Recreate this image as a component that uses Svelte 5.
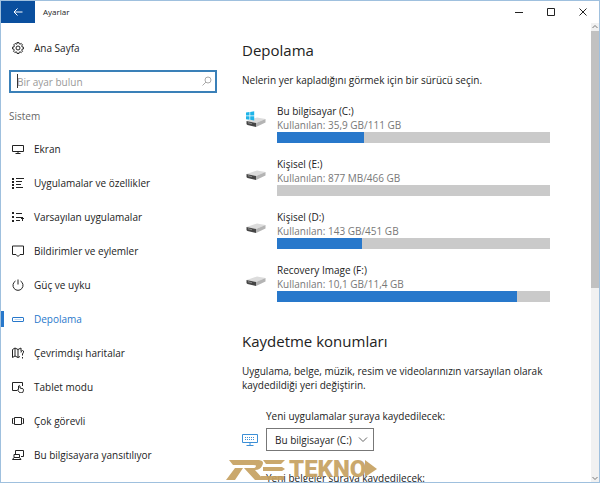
<!--
  Storage page of the settings window: title bar, section navigation,
  drive usage list and default save locations.
-->
<script lang="ts">
  type Drive = { name: string; used: string; percent: number; system?: boolean };

  const sections = [
    { id: 'display', label: 'Ekran' },
    { id: 'apps', label: 'Uygulamalar ve özellikler' },
    { id: 'defaults', label: 'Varsayılan uygulamalar' },
    { id: 'notifications', label: 'Bildirimler ve eylemler' },
    { id: 'power', label: 'Güç ve uyku' },
    { id: 'storage', label: 'Depolama' },
    { id: 'maps', label: 'Çevrimdışı haritalar' },
    { id: 'tablet', label: 'Tablet modu' },
    { id: 'multitasking', label: 'Çok görevli' },
    { id: 'projecting', label: 'Bu bilgisayara yansıtılıyor' },
  ];

  const drives: Drive[] = [
    { name: 'Bu bilgisayar (C:)', used: '35,9 GB/111 GB', percent: 32, system: true },
    { name: 'Kişisel (E:)', used: '877 MB/466 GB', percent: 0 },
    { name: 'Kişisel (D:)', used: '143 GB/451 GB', percent: 31 },
    { name: 'Recovery Image (F:)', used: '10,1 GB/11,4 GB', percent: 88 },
  ];

  let active = $state('storage');
  let query = $state('');
  let appTarget = $state('Bu bilgisayar (C:)');
</script>

{#snippet sectionIcon(id: string)}
  <svg class="icon" viewBox="0 0 12 12" aria-hidden="true">
    {#if id === 'display'}
      <path d="M.5 2.5h11v6H.5zM3.5 10.5h5M6 8.5v2" />
    {:else if id === 'apps'}
      <path d="M4 1.5h8M4 4.5h6M4 7.5h5M4 10.5h7" />
      <path class="dots" d="M0 1h2v2H0zM0 4h2v2H0zM0 7h2v2H0zM0 10h2v2H0z" />
    {:else if id === 'defaults'}
      <path d="M4 2.5h6M4 6.5h7M4 9.5h4M10.5 10V6.5M9 8l1.5-1.5L12 8" />
      <path class="dots" d="M0 1h2v2H0zM0 5h2v2H0zM0 9h2v2H0z" />
    {:else if id === 'notifications'}
      <path d="M.5 1h11v8.500H8L6 11.500l-2-2H.5z" />
    {:else if id === 'power'}
      <path d="M6 .5v5M3.500 2a5 5 0 1 0 5 0" />
    {:else if id === 'storage'}
      <rect x=".5" y="4.500" width="11" height="4" rx=".5" />
      <path class="faint" d="M2.500 6.500h7" />
    {:else if id === 'maps'}
      <path d="M.5 2.500 3 1l3 1.500L9 1v3M.5 2.500v8L3 9l3 1.500 2-1M3 1v8M6 2.500v8M9 5.500q0-2 1.500-2 1.500.2 1 1.700L10.500 7v1.500M10.500 10v1.500" />
    {:else if id === 'tablet'}
      <path d="M5 9.500H.5v-8h10V5M6.500 8.500V5q.7-1 1.500 0v2l3 .8q.8.5.4 2l-.9 2H7.800L5.500 9q0-.8 1-.5" />
    {:else if id === 'multitasking'}
      <path d="M2.500 2.500h7v7h-7zM1.500 3.500h-1v5h1M10.500 3.500h1v5h-1" />
    {:else}
      <path d="M3.500 5V1.500h8v6H9M2 5.500h5.500v3H2zM2 8.500l-1.500 2H9l-1.500-2" />
    {/if}
  </svg>
{/snippet}

<div class="window">
  <header class="titlebar">
    <button type="button" class="back" aria-label="Geri">
      <svg viewBox="0 0 10 10" aria-hidden="true"><path d="M9.500 5H1M4.500 1.500 1 5l3.500 3.500" /></svg>
    </button>
    <span class="title">Ayarlar</span>
    <div class="controls">
      <button type="button" aria-label="Simge durumuna küçült">
        <svg viewBox="0 0 8 8" aria-hidden="true"><path d="M0 4.500h8" /></svg>
      </button>
      <button type="button" aria-label="Ekranı kapla">
        <svg viewBox="0 0 8 8" aria-hidden="true"><path d="M.5.5h7v7h-7z" /></svg>
      </button>
      <button type="button" aria-label="Kapat">
        <svg viewBox="0 0 8 8" aria-hidden="true"><path d="m.5.5 7 7m0-7-7 7" /></svg>
      </button>
    </div>
  </header>

  <div class="body">
    <aside>
      <a class="home" href="#home">
        <svg viewBox="0 0 12 12" aria-hidden="true">
          <path d="m4.900.6.2 1.200-.9.400-1-.8L1.700 2.900l.7 1-.4 1L.6 5.100v1.900l1.300.2.4.9-.8 1.100 1.400 1.400 1.100-.8.9.4.2 1.300h1.900l.2-1.300.9-.4 1.100.8 1.300-1.400-.8-1.100.4-.9 1.300-.2V5.100l-1.300-.2-.4-1 .8-1-1.300-1.500-1.100.8-.9-.4L7 .6z" />
          <circle cx="6" cy="6" r="2" />
        </svg>
        Ana Sayfa
      </a>

      <div class="search">
        <input type="text" aria-label="Ayar bulun" placeholder="Bir ayar bulun" bind:value={query} />
        {#if !query}<span class="caret"></span>{/if}
        <svg viewBox="0 0 10 10" aria-hidden="true"><circle cx="6" cy="4" r="3" /><path d="M4 6 .5 9.500" /></svg>
      </div>

      <h2 class="group">Sistem</h2>
      <nav>
        {#each sections as section (section.id)}
          <a
            href="#{section.id}"
            class:active={active === section.id}
            aria-current={active === section.id ? 'page' : undefined}
            onclick={() => (active = section.id)}
          >
            {@render sectionIcon(section.id)}
            {section.label}
          </a>
        {/each}
      </nav>
    </aside>

    <main>
      <h1>Depolama</h1>
      <p class="hint">Nelerin yer kapladığını görmek için bir sürücü seçin.</p>

      <div class="drives">
        {#each drives as drive (drive.name)}
          <button type="button" class="drive">
            <svg class="disk" viewBox="0 0 22 24" aria-hidden="true">
              <path fill="#dcdcdc" d="M1.500 17 12 13.500l8.500 1.500L11 19z" />
              <path fill="#454545" d="m1.500 17 9.500 2v4l-8.500-2q-1-.5-1-1.500z" />
              <path fill="#b4b4b4" d="m11 19 9.500-4v3.500L11 23z" />
              <path fill="#8d8d8d" d="m3 18.300 4 .9v1l-4-.9z" />
              {#if drive.system}
                <path fill="#1fb4e8" d="m1 8.500 3.500-.5v3.500H1zM5.200 7.900 9.200 7.300v4.200h-4zM1 12.200h3.500v3.500L1 15.200zM5.200 12.200h4v4.200l-4-.6z" />
              {/if}
            </svg>
            <span class="info">
              <span class="name">{drive.name}</span>
              <span class="used">Kullanılan: {drive.used}</span>
              <progress max="100" value={drive.percent} aria-label={drive.name}></progress>
            </span>
          </button>
        {/each}
      </div>

      <h1>Kaydetme konumları</h1>
      <p class="hint">
        Uygulama, belge, müzik, resim ve videolarınızın varsayılan olarak kaydedildiği yeri değiştirin.
      </p>

      <div class="locations">
        <div class="location">
          <label for="apps-target">Yeni uygulamalar şuraya kaydedilecek:</label>
          <svg class="pc" viewBox="0 0 16 14" aria-hidden="true">
            <path d="M.5 1.500h15v8H.5zM8 9.500v3M4.500 12.500h7" />
            <path class="keys" d="M3 4.500h10M3 6.500h10" />
          </svg>
          <div class="select">
            <select id="apps-target" bind:value={appTarget}>
              {#each drives as drive (drive.name)}
                <option>{drive.name}</option>
              {/each}
            </select>
            <svg viewBox="0 0 10 6" aria-hidden="true"><path d="m1 .5 4 4 4-4" /></svg>
          </div>
        </div>
        <div class="location">
          <label for="docs-target">Yeni belgeler şuraya kaydedilecek:</label>
          <div class="select">
            <select id="docs-target">
              {#each drives as drive (drive.name)}
                <option>{drive.name}</option>
              {/each}
            </select>
          </div>
        </div>
      </div>
    </main>

    <div class="scrollbar" aria-hidden="true">
      <svg viewBox="0 0 8 8"><path d="m1.500 5 2.500-2.500L6.500 5" /></svg>
      <div class="track"><div class="thumb"></div></div>
      <svg viewBox="0 0 8 8"><path d="M1.500 3 4 5.500 6.500 3" /></svg>
    </div>
  </div>

  <svg class="watermark" viewBox="0 0 152 24" role="img" aria-label="RE Tekno">
    <path d="M4 2h30q6 1 3 6-2 4-7 4l9 10h-9L19 10h9q3 0 3-2 0-1-3-1H8zM10 10h8L10 22H1zM38 2h22l-4 4H41zM38 9h19l3 2-3 2H38zM36 18h23v4H36z" />
    <text x="64" y="19">TEKNO</text>
    <path d="m140 2 12 9-12 8z" />
  </svg>
</div>

<style>
  :global(body) {
    background: #fff;
  }
  .window {
    --accent: #2878cb;
    position: relative;
    box-sizing: border-box;
    display: flex;
    flex-direction: column;
    height: 100vh;
    overflow: hidden;
    border: 1px solid #9fc0de;
    background: #fff;
    color: #222;
    font-family: 'Open Sans', 'Noto Sans', sans-serif;
    font-size: 10px;
    line-height: 14px;
  }
  svg {
    display: block;
    fill: none;
    stroke: currentColor;
  }
  button {
    padding: 0;
    border: none;
    background: none;
    color: inherit;
    font: inherit;
  }
  a {
    color: inherit;
    text-decoration: none;
  }
  .titlebar {
    flex: none;
    display: flex;
    align-items: center;
    height: 22px;
    font-size: 8px;
  }
  .back {
    display: grid;
    place-items: center;
    width: 34px;
    height: 22px;
    background: #0a4f9e;
    color: #fff;
  }
  .back svg {
    width: 10px;
    height: 10px;
  }
  .title {
    flex: 1;
    padding-left: 8px;
  }
  .controls {
    display: flex;
  }
  .controls button {
    display: grid;
    place-items: center;
    width: 32px;
    height: 22px;
  }
  .controls svg {
    width: 8px;
    height: 8px;
  }
  .body {
    flex: 1;
    display: flex;
    min-height: 0;
  }
  aside {
    flex: none;
    width: 217px;
  }
  .home {
    display: flex;
    align-items: center;
    gap: 10px;
    height: 24px;
    margin-top: 13px;
    padding-left: 11px;
  }
  .home svg {
    width: 12px;
    height: 12px;
  }
  .search {
    position: relative;
    margin: 10px 1px 0 8px;
  }
  .search input {
    box-sizing: border-box;
    display: block;
    width: 100%;
    height: 23px;
    padding: 0 24px 0 6px;
    border: 2px solid #3a80b8;
    outline: none;
    font: inherit;
  }
  .search input::placeholder {
    color: #999;
  }
  .caret {
    position: absolute;
    left: 8px;
    top: 4px;
    width: 1px;
    height: 14px;
    background: #333;
  }
  .search svg {
    position: absolute;
    right: 5px;
    top: 6px;
    width: 10px;
    height: 10px;
    color: #aaa;
  }
  .group {
    margin: 16px 0 9px 8px;
    color: #666;
    font-size: 10px;
    font-weight: 400;
  }
  nav a {
    display: flex;
    align-items: center;
    gap: 10px;
    height: 34px;
    padding-left: 11px;
  }
  nav a.active {
    color: var(--accent);
    background: linear-gradient(var(--accent), var(--accent)) 0 center / 3px 16px no-repeat;
  }
  .icon {
    width: 12px;
    height: 12px;
  }
  .dots {
    fill: currentColor;
    stroke: none;
  }
  .faint {
    opacity: 0.3;
  }
  main {
    flex: 1;
    min-width: 0;
    overflow: hidden;
    padding: 17px 41px 0 24px;
  }
  h1 {
    margin: 0;
    font-size: 15px;
    font-weight: 400;
    line-height: 20px;
  }
  .hint {
    margin: 13px 0 0;
  }
  .drives {
    display: flex;
    flex-direction: column;
    gap: 14px;
    margin: 17px 0 29px;
  }
  .drive {
    display: flex;
    gap: 10px;
    padding-left: 3px;
    text-align: left;
  }
  .disk {
    flex: none;
    width: 22px;
    height: 24px;
    stroke: none;
  }
  .info {
    flex: 1;
    display: flex;
    flex-direction: column;
  }
  .used {
    color: #777;
  }
  progress {
    appearance: none;
    display: block;
    width: 100%;
    height: 11px;
    border: none;
    background: #cacaca;
  }
  progress::-webkit-progress-bar {
    background: #cacaca;
  }
  progress::-webkit-progress-value {
    background: var(--accent);
  }
  .locations {
    display: flex;
    flex-direction: column;
    gap: 20px;
    margin-top: 17px;
  }
  .location {
    display: grid;
    grid-template-columns: 16px 1fr;
    align-items: center;
    gap: 5px 8px;
  }
  .location label,
  .location .select {
    grid-column: 2;
  }
  .pc {
    width: 16px;
    height: 14px;
    color: #3c8fd6;
  }
  .keys {
    stroke-dasharray: 1 1;
  }
  .select {
    position: relative;
    justify-self: start;
  }
  select {
    appearance: none;
    display: block;
    box-sizing: border-box;
    width: 108px;
    height: 23px;
    padding: 0 8px;
    border: 1px solid #777;
    border-radius: 0;
    background: #fff;
    color: inherit;
    font: inherit;
  }
  .select svg {
    position: absolute;
    right: 6px;
    top: 9px;
    width: 10px;
    height: 6px;
    color: #666;
    pointer-events: none;
  }
  .scrollbar {
    flex: none;
    display: flex;
    flex-direction: column;
    width: 8px;
    background: #f1f1f1;
    color: #777;
  }
  .scrollbar svg {
    width: 8px;
    height: 8px;
  }
  .track {
    flex: 1;
  }
  .thumb {
    height: 58%;
    background: #c1c1c1;
  }
  .watermark {
    position: absolute;
    left: 224px;
    bottom: 0;
    width: 152px;
    height: 24px;
    fill: #c6a161;
    stroke: none;
    opacity: 0.92;
    pointer-events: none;
  }
  .watermark text {
    font: 900 24px Roboto, sans-serif;
  }
</style>
